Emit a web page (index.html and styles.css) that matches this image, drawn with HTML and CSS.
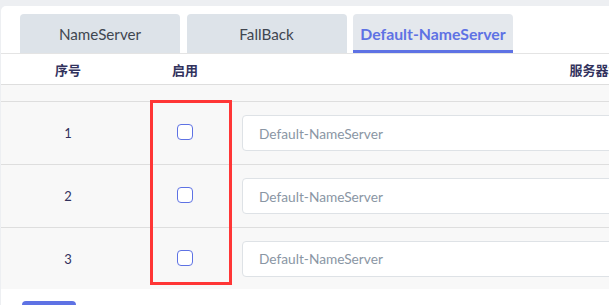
FILE: index.html
```html
<!DOCTYPE html>
<html lang="zh">
<head>
<meta charset="utf-8">
<link rel="stylesheet" href="styles.css">
</head>
<body>
<div class="card">
  <div class="tabs">
    <div class="tab">NameServer</div>
    <div class="tab">FallBack</div>
    <div class="tab active">Default-NameServer</div>
  </div>
  <div class="table">
    <div class="thead">
      <div class="c1">序号</div>
      <div class="c2">启用</div>
      <div class="c3">服务器地址</div>
    </div>
    <div class="spacer"></div>
    <div class="row">
      <div class="c1">1</div>
      <div class="c2"><span class="check"></span></div>
      <div class="c3i"><input class="field" placeholder="Default-NameServer"></div>
    </div>
    <div class="row">
      <div class="c1">2</div>
      <div class="c2"><span class="check"></span></div>
      <div class="c3i"><input class="field" placeholder="Default-NameServer"></div>
    </div>
    <div class="row last">
      <div class="c1">3</div>
      <div class="c2"><span class="check"></span></div>
      <div class="c3i"><input class="field" placeholder="Default-NameServer"></div>
    </div>
    <div class="highlight"></div>
  </div>
  <div class="actions"><button class="btn">保存</button></div>
</div>
</body>
</html>
```
FILE: styles.css
```css
html, body {
  margin: 0;
  padding: 0;
  background: #edeff2;
  overflow: hidden;
  width: 609px;
  height: 305px;
}
body {
  font-family: Lato, "Noto Sans CJK SC", sans-serif;
  color: #32325d;
}
.card {
  margin: 6px 0 0 1px;
  background: #fff;
  border-top-left-radius: 5px;
  width: 1200px;
  height: 400px;
}
.tabs {
  display: flex;
  gap: 6.5px;
  padding: 8px 0 0 19px;
  border-bottom: 1px solid #e4e4e4;
}
.tab {
  box-sizing: border-box;
  width: 160px;
  height: 39px;
  background: #dde3e9;
  border-radius: 4px 4px 0 0;
  color: #404650;
  font-size: 15.2px;
  display: flex;
  align-items: center;
  justify-content: center;
}
.tab.active {
  background: #e4e8ed;
  color: #5e72e4;
  font-weight: 700;
  font-size: 15.8px;
  border-bottom: 3px solid #5e72e4;
  padding-top: 3px;
}
.table {
  position: relative;
}
.thead {
  display: flex;
  height: 30px;
  align-items: center;
  border-bottom: 1px solid #dedede;
  font-weight: 700;
  font-size: 13px;
  font-family: "Noto Sans CJK SC", sans-serif;
}
.c1 { width: 134px; text-align: center; }
.c2 { width: 100px; text-align: center; display: flex; justify-content: center; }
.c3 { width: 734px; text-align: center; }
.c3i { padding-left: 7px; }
.spacer {
  height: 16px;
  background: #f8f8f8;
  border-bottom: 1px solid #dedede;
}
.row {
  display: flex;
  align-items: center;
  height: 62px;
  background: #f8f8f8;
  border-bottom: 1px solid #dedede;
  font-size: 13px;
}
.row.last {
  border-bottom: none;
  height: 61px;
}
.check {
  display: block;
  box-sizing: border-box;
  width: 16px;
  height: 16px;
  border: 1px solid #5e72e4;
  border-radius: 4px;
  background: #fff;
  margin-top: -2px;
}
.field {
  box-sizing: border-box;
  width: 600px;
  height: 36px;
  border: 1px solid #dee2e6;
  border-radius: 4px;
  background: #fff;
  padding: 0 16px;
  font-family: Lato, sans-serif;
  font-size: 13.7px;
  outline: none;
}
.field::placeholder {
  color: #8a96a4;
}
.highlight {
  position: absolute;
  left: 149px;
  top: 46px;
  width: 76px;
  height: 179px;
  border: 3px solid #ff3636;
}
.actions {
  padding: 12px 0 0 21px;
}
.btn {
  width: 54px;
  height: 30px;
  border: none;
  border-radius: 4px;
  background: #5e72e4;
  color: #fff;
  font-size: 13px;
}
```
